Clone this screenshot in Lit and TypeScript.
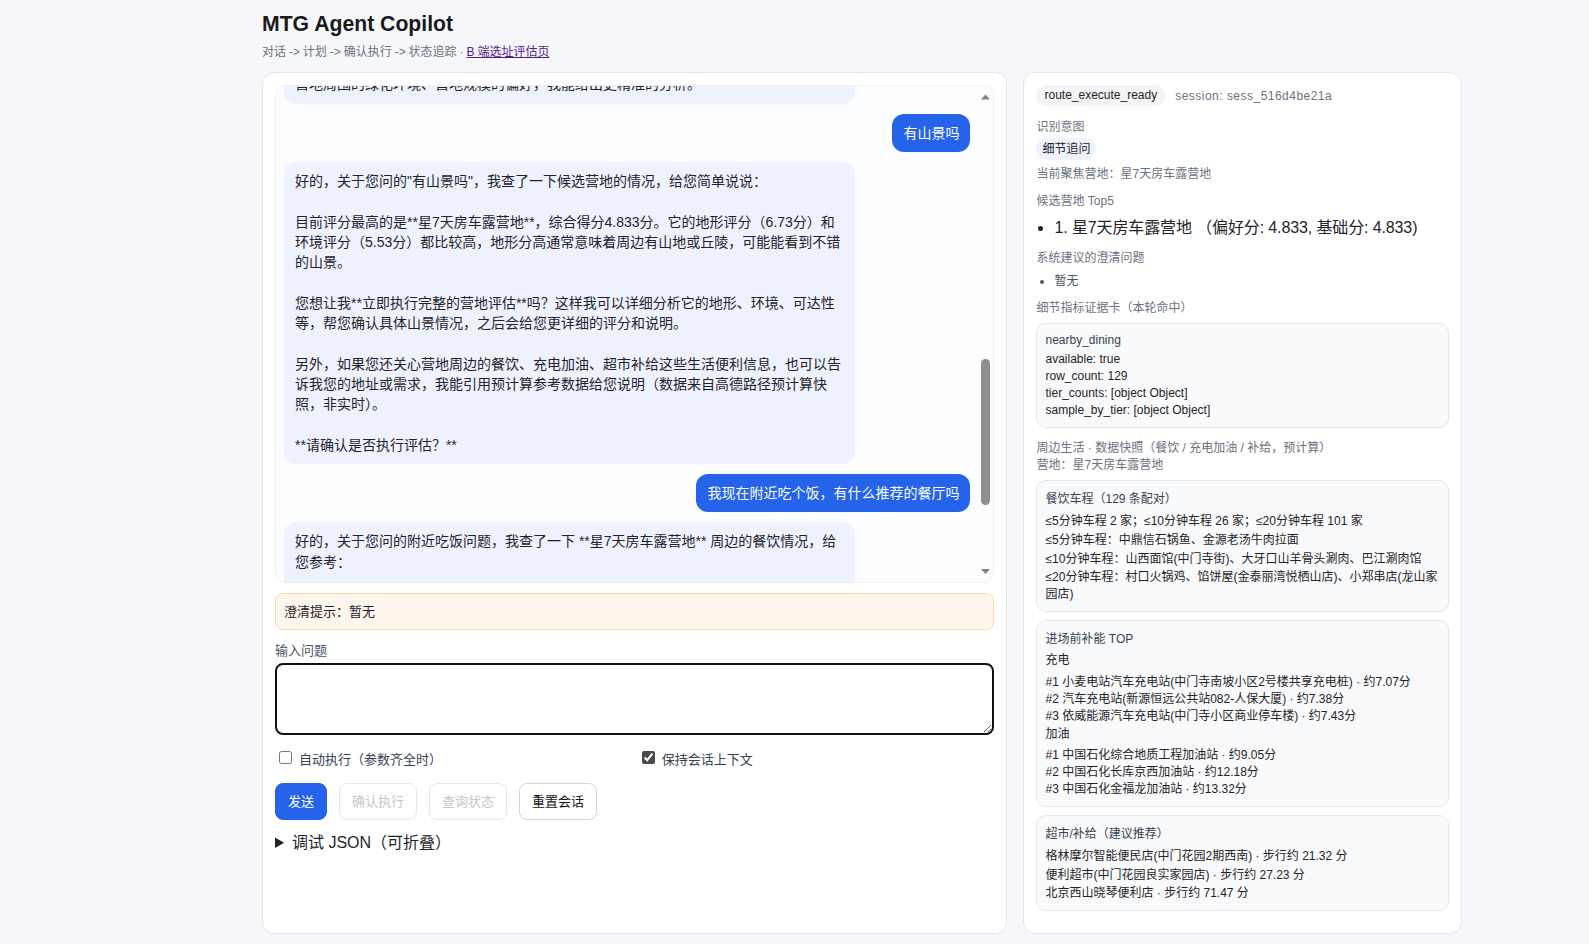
import { LitElement, html, css } from "lit";
import { customElement } from "lit/decorators.js";

@customElement("app-root")
export class AppRoot extends LitElement {
  static styles = css`
    :host { display: block; min-height: 944px; background: #f6f7fb; color: #1f2328; font-family: "Liberation Sans", "Noto Sans CJK SC", sans-serif; font-size: 13px; box-sizing: border-box; }
    * { box-sizing: border-box; }
    .page { width: 1200px; margin-left: 262px; padding: 11px 0 11px; }
    h1 { margin: 0; font-size: 21.2px; line-height: 25px; font-weight: 700; color: #1a1a1a; }
    .sub { margin: 8px 0 12px; font-size: 12px; line-height: 16px; color: #6b7280; word-spacing: -0.4px; }
    .sub a { color: #551a8b; text-decoration: underline; }
    .grid { display: grid; grid-template-columns: 1.7fr 1fr; gap: 16px; }
    .card { background: #fff; border: 1px solid #e5e7eb; border-radius: 12px; padding: 12px; height: 862px; }
    .chatwrap { position: relative; height: 498px; }
    .chat { height: 100%; overflow-y: scroll; scrollbar-width: none; border: 1px solid #eef0f4; border-radius: 10px; padding: 10px 23px 10px 8px; background: #fcfdff; display: flex; flex-direction: column; gap: 10px; }
    .sb { position: absolute; top: 1px; right: 1px; bottom: 1px; width: 15px; display: flex; flex-direction: column; justify-content: space-between; padding: 3px 0 3px; pointer-events: none; }
    .sb svg { display: block; width: 15px; height: 15px; }
    .sb .thumb { position: absolute; top: 273px; left: 3px; width: 9px; height: 146px; background: #8f8f8f; border-radius: 5px; }
    .m { flex: none; font-size: 14px; line-height: 20.3px; padding: 9px 11px; border-radius: 12px; white-space: pre-wrap; }
    .a { background: #eef2ff; color: #1f2328; align-self: flex-start; width: 571px; }
    .u { background: #2563eb; color: #fff; align-self: flex-end; }
    .hint { margin-top: 10px; background: #fff7ed; border: 1px solid #fed7aa; border-radius: 8px; padding: 8px; font-size: 13px; line-height: 20px; height: 37px; }
    .lab { display: block; margin: 13px 0 4px; font-size: 13px; line-height: 16px; color: #4b5563; }
    textarea { display: block; width: 100%; height: 72px; border: 2px solid #111; border-radius: 8px; outline: none; background: #fff; }
    .opts { display: grid; grid-template-columns: 1fr 1fr; gap: 6px; margin-top: 13px; font-size: 13px; color: #374151; }
    .opts label { display: flex; align-items: center; gap: 7px; height: 20px; }
    .opts input { margin: 0 0 2px 4px; width: 13px; height: 13px; accent-color: #4a4a4a; }
    .btns { display: flex; gap: 12px; margin-top: 15px; }
    button { height: 37px; border-radius: 8px; padding: 0 12px 2px; font: inherit; font-size: 13px; border: 1px solid #d1d5db; background: #fff; color: #111; }
    button.p { background: #2563eb; border-color: #2563eb; color: #fff; }
    button:disabled.d { color: #c4c7cc; border-color: #e5e7eb; }
    details { margin-top: 13px; font-size: 16px; line-height: 20px; color: #1f2328; }
    .chip { display: inline-block; background: #f3f4f6; border-radius: 999px; padding: 2px 8px; font-size: 12px; line-height: 17px; }
    .muted { color: #6b7280; font-size: 12px; line-height: 16px; }
    .top { display: flex; align-items: center; gap: 10px; }
    .session { letter-spacing: 0.48px; }
    .intent { margin-top: 13px; }
    .focus { margin-top: 6px; }
    .cand { margin-top: 11px; }
    .chip2 { display: inline-block; background: #eef2ff; border-radius: 999px; padding: 3px 6px; font-size: 12px; line-height: 16px; margin-top: 3px; }
    ul { margin: 0; padding-left: 18px; }
    .big { margin: 8px 0 11px; font-size: 16px; line-height: 22px; letter-spacing: -0.12px; }
    .sm { margin: 7px 0 11px; font-size: 12px; line-height: 16px; color: #4b5563; }
    .life { margin-top: 12px; line-height: 17px; }
    .box { margin-top: 8px; background: #f9fafb; border: 1px solid #e5e7eb; border-radius: 10px; padding: 9px 8px 8px; font-size: 12px; line-height: 17px; }
    .box.first { margin-top: 7px; padding-top: 7px; }
    .box.dining { margin-top: 6px; }
    .box .t { color: #374151; margin-bottom: 4px; line-height: 18px; }
    .box.first .t { margin-bottom: 2px; }
    .box.energy .t { margin-bottom: 3px; }
    .box .r { line-height: 19px; }
    .box .h { line-height: 19px; margin-bottom: 3px; }
    .box .h.lead { margin-bottom: 4px; }
    .box.supply { padding-bottom: 7px; }
    .box.supply .r { line-height: 18.5px; }
  `;

  firstUpdated() {
    const c = this.renderRoot.querySelector(".chat") as HTMLElement;
    const anchor = this.renderRoot.querySelector(".anchor") as HTMLElement;
    c.scrollTop = anchor.offsetTop - c.offsetTop - 29;
  }

  render() {
    return html`<div class="page">
      <h1>MTG Agent Copilot</h1>
      <div class="sub">对话 -&gt; 计划 -&gt; 确认执行 -&gt; 状态追踪 · <a href="#">B 端选址评估页</a></div>
      <div class="grid">
        <section class="card">
          <div class="chatwrap">
            <div class="chat">
              <div class="m u">帮我找一个适合周末露营的营地</div>
              <div class="m a">好的，我先为您查看候选营地的整体情况。

目前候选营地中评分最高的是星7天房车露营地，综合得分4.833分。

地形方面，营地周边以缓坡和丘陵为主，适合搭建帐篷和停放房车。

环境方面，植被覆盖较好，夏季相对凉爽，周边空气质量也不错。

可达性方面，从市区出发走高速约一个半小时可以到达。

如果您想了解更多，可以告诉我您关心的方面，比如地形、可达性等。

也欢迎告诉我您的出行人数和停留天数，我会据此调整推荐结果。</div>
              <div class="m u">还有其他需要考虑的吗</div>
              <div class="m a">当然，您可以再告诉我一些偏好，我来帮您进一步筛选：

1. 是否需要电源和补能设施；

2. 是否携带宠物或小朋友同行；

3. 是否偏好水边、林地或者山地；

4. 对餐饮和超市补给的距离是否敏感；

5. 预计出发的日期和停留的时长。

这些信息都不是必须的，您可以只提供其中几项。

如果暂时没有明确的想法，我也可以先按综合评分给您推荐。

您提供的信息越详细，我就越能够结合具体需求给您建议。

比如您告诉我更看重营地周围的自然风光，我会更关注地形和

营地周围的绿化环境、营地规模的偏好，我能给出更精准的分析。</div>
              <div class="m u anchor">有山景吗</div>
              <div class="m a">好的，关于您问的"有山景吗"，我查了一下候选营地的情况，给您简单说说：

目前评分最高的是**星7天房车露营地**，综合得分4.833分。它的地形评分（6.73分）和环境评分（5.53分）都比较高，地形分高通常意味着周边有山地或丘陵，可能能看到不错的山景。

您想让我**立即执行完整的营地评估**吗？这样我可以详细分析它的地形、环境、可达性等，帮您确认具体山景情况，之后会给您更详细的评分和说明。

另外，如果您还关心营地周边的餐饮、充电加油、超市补给这些生活便利信息，也可以告诉我您的地址或需求，我能引用预计算参考数据给您说明（数据来自高德路径预计算快照，非实时）。

**请确认是否执行评估？**</div>
              <div class="m u">我现在附近吃个饭，有什么推荐的餐厅吗</div>
              <div class="m a">好的，关于您问的附近吃饭问题，我查了一下 **星7天房车露营地** 周边的餐饮情况，给您参考：

≤5分钟车程：中鼎信石锅鱼、金源老汤牛肉拉面

≤10分钟车程：山西面馆(中门寺街)、大牙口山羊骨头涮肉、巴江涮肉馆

≤20分钟车程：村口火锅鸡、馅饼屋(金泰丽湾悦栖山店)、小郑串店

以上数据来自高德路径预计算快照，非实时，仅供参考。

您还想了解其他方面的信息吗？</div>
            </div>
            <div class="sb">
              <svg viewBox="0 0 15 15"><path d="M7.5 5.5L12 10.5H3z" fill="#808080" /></svg>
              <div class="thumb"></div>
              <svg viewBox="0 0 15 15"><path d="M7.5 10L12 5H3z" fill="#808080" /></svg>
            </div>
          </div>
          <div class="hint">澄清提示：暂无</div>
          <label class="lab">输入问题</label>
          <textarea></textarea>
          <div class="opts">
            <label><input type="checkbox" />自动执行（参数齐全时）</label>
            <label><input type="checkbox" checked />保持会话上下文</label>
          </div>
          <div class="btns">
            <button class="p">发送</button>
            <button class="d" disabled>确认执行</button>
            <button class="d" disabled>查询状态</button>
            <button>重置会话</button>
          </div>
          <details><summary>调试 JSON（可折叠）</summary></details>
        </section>
        <section class="card">
          <div class="top"><span class="chip">route_execute_ready</span><span class="muted session">session: sess_516d4be21a</span></div>
          <div class="muted intent">识别意图</div>
          <span class="chip2">细节追问</span>
          <div class="muted focus">当前聚焦营地：星7天房车露营地</div>
          <div class="muted cand">候选营地 Top5</div>
          <ul class="big"><li>1. 星7天房车露营地 （偏好分: 4.833, 基础分: 4.833)</li></ul>
          <div class="muted">系统建议的澄清问题</div>
          <ul class="sm"><li>暂无</li></ul>
          <div class="muted">细节指标证据卡（本轮命中）</div>
          <div class="box first">
            <div class="t">nearby_dining</div>
            <div>available: true</div><div>row_count: 129</div><div>tier_counts: [object Object]</div><div>sample_by_tier: [object Object]</div>
          </div>
          <div class="muted life">周边生活 · 数据快照（餐饮 / 充电加油 / 补给，预计算）<br />营地：星7天房车露营地</div>
          <div class="box dining">
            <div class="t">餐饮车程（129 条配对）</div>
            <div class="r">≤5分钟车程 2 家；≤10分钟车程 26 家；≤20分钟车程 101 家</div>
            <div class="r">≤5分钟车程：中鼎信石锅鱼、金源老汤牛肉拉面</div>
            <div class="r">≤10分钟车程：山西面馆(中门寺街)、大牙口山羊骨头涮肉、巴江涮肉馆</div>
            <div>≤20分钟车程：村口火锅鸡、馅饼屋(金泰丽湾悦栖山店)、小郑串店(龙山家园店)</div>
          </div>
          <div class="box energy">
            <div class="t">进场前补能 TOP</div>
            <div class="h lead">充电</div>
            <div>#1 小麦电站汽车充电站(中门寺南坡小区2号楼共享充电桩) · 约7.07分</div>
            <div>#2 汽车充电站(新源恒远公共站082-人保大厦) · 约7.38分</div>
            <div>#3 依威能源汽车充电站(中门寺小区商业停车楼) · 约7.43分</div>
            <div class="h">加油</div>
            <div>#1 中国石化综合地质工程加油站 · 约9.05分</div>
            <div>#2 中国石化长库京西加油站 · 约12.18分</div>
            <div>#3 中国石化金福龙加油站 · 约13.32分</div>
          </div>
          <div class="box supply">
            <div class="t">超市/补给（建议推荐）</div>
            <div class="r">格林摩尔智能便民店(中门花园2期西南) · 步行约 21.32 分</div>
            <div class="r">便利超市(中门花园良实家园店) · 步行约 27.23 分</div>
            <div class="r">北京西山晓琴便利店 · 步行约 71.47 分</div>
          </div>
        </section>
      </div>
    </div>`;
  }
}
